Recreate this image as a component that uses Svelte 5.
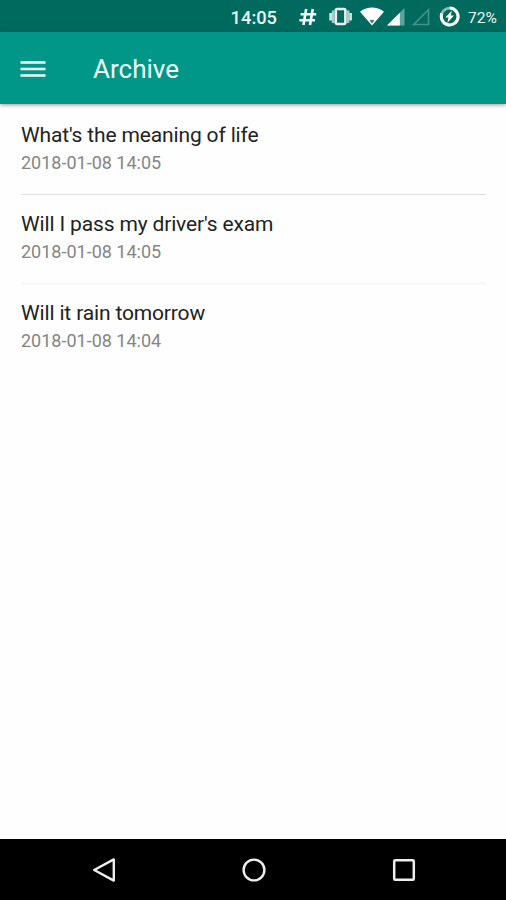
<script>
  const entries = [
    { question: "What's the meaning of life", date: "2018-01-08 14:05" },
    { question: "Will I pass my driver's exam", date: "2018-01-08 14:05" },
    { question: "Will it rain tomorrow", date: "2018-01-08 14:04" },
  ];
</script>

<div class="screen">
  <div class="status-bar">
    <span class="clock">14:05</span>
    <svg class="status-icons" width="162" height="32" viewBox="298 0 162 32">
      <!-- hash -->
      <path
        d="M306.2 9 303.4 25M312.8 9 310 25M300.6 14.2H316.2M299.4 20.2H315"
        fill="none"
        stroke="#f2fffc"
        stroke-width="2.6"
      />
      <!-- vibrate -->
      <rect x="335.8" y="9" width="9.6" height="15" rx="1.5" fill="none" stroke="#e6f3f1" stroke-width="2.6" />
      <path d="M333.2 10.5v12.5M348 10.5v12.5" stroke="#a9ceca" stroke-width="2.8" />
      <path d="M330.6 13v7.5M350.6 13v7.5" stroke="#d6e9e7" stroke-width="2.6" />
      <!-- wifi -->
      <path d="M360 11.8q12-8.4 24 0L372 25.5z" fill="#fff" />
      <path d="M369.5 20.6q2.5-1.7 5 0L372 23.6z" fill="#3b8179" />
      <!-- signal -->
      <path d="M404.5 8v17.5H387z" fill="#5da49b" />
      <path d="M399.8 12.7v12.8H387z" fill="#fff" />
      <path d="M428.5 9.8v14.7H413.8z" fill="none" stroke="#469188" stroke-width="1.6" />
      <!-- battery -->
      <circle cx="449.7" cy="16.5" r="8.4" fill="none" stroke="#8bbdb7" stroke-width="2.8" />
      <path d="M449.7 8.1a8.4 8.4 0 1 1-7.9 5.5" fill="none" stroke="#fff" stroke-width="3" />
      <path d="M452 10.4 445.4 17.5h3.1l-1.2 5.5 6.6-7.4h-3.3z" fill="#fff" />
    </svg>
    <span class="battery">72%</span>
  </div>

  <header class="app-bar">
    <button class="menu" aria-label="Open menu">
      <svg width="26" height="18" viewBox="0 0 26 18">
        <path d="M.5 2.5h25M.5 9h25M.5 15.5h25" stroke="#edfffb" stroke-width="2.5" />
      </svg>
    </button>
    <h1>Archive</h1>
  </header>

  <ul class="entries">
    {#each entries as entry}
      <li>
        <span class="question">{entry.question}</span>
        <span class="date">{entry.date}</span>
      </li>
    {/each}
  </ul>

  <nav class="nav-bar">
    <button aria-label="Back">
      <svg width="26" height="28" viewBox="0 0 26 28">
        <path d="M22.8 3.4v21.2L3.2 14z" fill="none" stroke="#eee" stroke-width="2.4" stroke-linejoin="round" />
      </svg>
    </button>
    <button aria-label="Home">
      <svg width="26" height="28" viewBox="0 0 26 28">
        <circle cx="13" cy="14" r="10.4" fill="none" stroke="#eee" stroke-width="2.4" />
      </svg>
    </button>
    <button aria-label="Recent apps">
      <svg width="26" height="28" viewBox="0 0 26 28">
        <rect x="3.2" y="4.2" width="19.6" height="19.6" rx="1" fill="none" stroke="#eee" stroke-width="2.5" />
      </svg>
    </button>
  </nav>
</div>

<style>
  :global(body) {
    margin: 0;
  }

  .screen {
    display: flex;
    flex-direction: column;
    width: 506px;
    height: 900px;
    overflow: hidden;
    background: #fefefe;
    font-family: Roboto, sans-serif;
  }

  .status-bar {
    display: flex;
    align-items: center;
    justify-content: flex-end;
    height: 32px;
    padding-right: 8px;
    background: #016a5f;
    color: #e8f6f4;
    white-space: nowrap;
  }

  .clock {
    margin-right: 21px;
    padding-top: 4px;
    font-size: 18.3px;
    font-weight: 500;
    line-height: 30px;
  }

  .status-icons {
    flex: none;
  }

  .battery {
    width: 30px;
    margin-left: 8px;
    padding-top: 4px;
    font-size: 15.5px;
    line-height: 30px;
  }

  .app-bar {
    display: flex;
    align-items: center;
    height: 72px;
    padding-left: 20px;
    background: #009788;
    box-shadow: 0 1px 4px rgba(0, 0, 0, 0.4);
  }

  button {
    display: flex;
    padding: 0;
    border: 0;
    background: none;
  }

  .menu {
    padding-top: 2px;
  }

  h1 {
    margin: 0 0 0 47px;
    padding-top: 2px;
    color: #edfffb;
    font-size: 26px;
    font-weight: 400;
    line-height: 36px;
  }

  .entries {
    flex: 1;
    margin: 0;
    padding: 2px 20px 0 21px;
    list-style: none;
  }

  li {
    display: flex;
    flex-direction: column;
    box-sizing: border-box;
    height: 89px;
    padding-top: 15px;
    border-bottom: 1px solid #dedede;
  }

  li:nth-child(2) {
    height: 90px;
    border-bottom: 3px solid #f7f7f7;
  }

  li:last-child {
    padding-top: 14px;
    border-bottom: 0;
  }

  .question {
    color: #222;
    font-size: 21px;
    letter-spacing: -0.15px;
    line-height: 28px;
  }

  .date {
    color: #858585;
    font-size: 18px;
    line-height: 28px;
  }

  .nav-bar {
    display: flex;
    align-items: center;
    justify-content: space-between;
    height: 61px;
    box-sizing: border-box;
    padding: 0 89px 0 91px;
    background: #000;
  }
</style>
